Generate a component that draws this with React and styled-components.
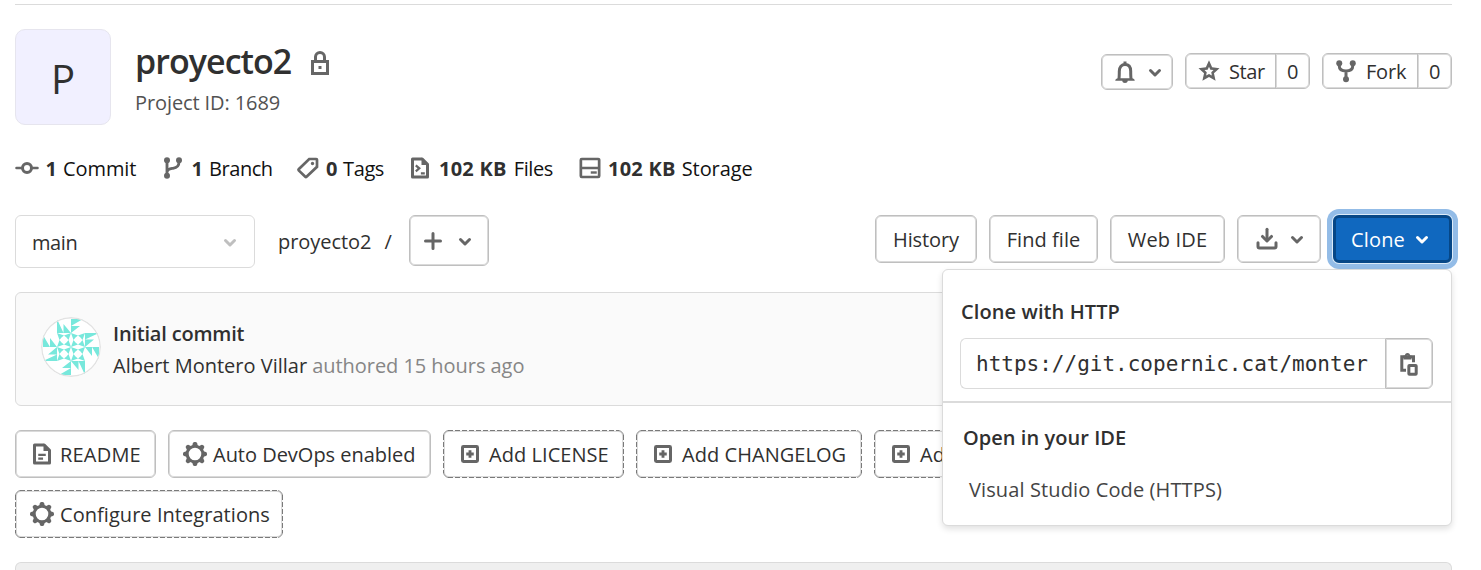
import React from "react";
import styled, { createGlobalStyle, css } from "styled-components";

const Global = createGlobalStyle`
  *, *::before, *::after { box-sizing: border-box; }
  body { margin: 0; background: #fff; overflow: hidden; }
  #root { font-family: "Open Sans", "Noto Sans", sans-serif; font-size: 20px; color: #303030; }
`;

const Page = styled.div`
  width: 1437px;
  height: 570px;
  margin-left: 15px;
  padding-top: 4px;
`;
const TopRule = styled.div`height: 1px; background: #dbdbdb;`;

const Text = styled.span`
  font-size: 20px;
  line-height: 28px;
  padding-top: ${(p) => p.$drop ?? 2}px;
  letter-spacing: ${(p) => p.$ls ?? -0.4}px;
  font-weight: ${(p) => p.$weight || 400};
  color: ${(p) => p.$color || "#303030"};
  white-space: nowrap;
`;

const Glyph = styled.svg`
  display: block;
  flex: none;
  width: 24px;
  height: 24px;
  fill: none;
  stroke: currentColor;
  stroke-width: 2;
  color: ${(p) => p.$color || "#666"};
`;

const paths = {
  lock: (
    <>
      <path d="M3 7h10v8H3zM5 7V4a3 3 0 0 1 6 0v3" />
      <rect x="7" y="10" width="2" height="2" fill="currentColor" stroke="none" />
    </>
  ),
  bell: (
    <>
      <path d="M3.900 13c.3-1.500.3-3 .3-5.500C4.200 4.500 5.800 3 8 3s3.800 1.500 3.800 4.500c0 2.500 0 4 .3 5.500" />
      <path d="M1.500 13.800c0-1 .8-1.600 2-1.600h9c1.200 0 2 .6 2 1.600zM6.200 13.800h3.600c0 1-.8 1.500-1.800 1.500s-1.800-.5-1.800-1.500zM7 1h2v2H7z" fill="currentColor" stroke="none" />
    </>
  ),
  chevron: <path d="M5 7l3 3 3-3" strokeLinecap="round" strokeLinejoin="round" />,
  star: (
    <path
      fill="currentColor"
      fillRule="evenodd"
      stroke="none"
      d="M8 .9L10.100 5.500 15 6.100 11.300 9.450 12.400 14.500 8 12 3.600 14.500 4.700 9.450 1 6.100 5.900 5.500zM8 5.200L7.100 7.100 5 7.350 6.500 8.900 6.100 11 8 10 9.900 11 9.500 8.900 11 7.350 8.900 7.100z"
    />
  ),
  fork: (
    <>
      <path d="M3.500 3v1.500C3.500 7 5.500 8 8 8s4.500-1 4.500-3.500V3M8 8v5" />
      <g fill="currentColor" stroke="none">
        <circle cx="3.500" cy="2.800" r="2" />
        <circle cx="12.500" cy="2.800" r="2" />
        <circle cx="8" cy="13.500" r="2" />
      </g>
    </>
  ),
  commit: (
    <>
      <circle cx="8" cy="8" r="3" />
      <path d="M1 8h4M11 8h4" strokeLinecap="round" strokeWidth="1.700" />
    </>
  ),
  branch: (
    <>
      <path d="M4 3v10M4 10.500c.5-2 2-2 4-2.300 2.500-.4 4-1.200 4-4.200" strokeWidth="1.900" />
      <g fill="currentColor" stroke="none">
        <circle cx="4" cy="2.800" r="2" />
        <circle cx="4" cy="13.200" r="2" />
        <circle cx="12" cy="2.800" r="2" />
      </g>
    </>
  ),
  tag: (
    <>
      <path d="M8.800 2h4.700a.5.5 0 0 1 .5.5v4.700l-7 6.600a.6.6 0 0 1-.8 0L1.800 9.600a.6.6 0 0 1 0-.8z" strokeWidth="1.800" />
      <circle cx="11" cy="5" r="1.100" fill="currentColor" stroke="none" />
    </>
  ),
  code: (
    <>
      <path d="M3 2h6.500L13 5.500V14H3z" strokeLinejoin="round" />
      <path d="M9 1v5h5L9 1z" fill="currentColor" stroke="none" />
      <path d="M5.200 6.200l2.300 2-2.300 2M8.600 11.500h2.600" strokeWidth="1.500" />
    </>
  ),
  disk: (
    <>
      <path d="M2.500 2h11a.6.6 0 0 1 .6.6v10.800a.6.6 0 0 1-.6.6h-11a.6.6 0 0 1-.6-.6V2.600a.6.6 0 0 1 .6-.6zM2 8h12" strokeWidth="1.800" />
      <path d="M8.500 10.200h4v1.600h-4z" fill="currentColor" stroke="none" />
    </>
  ),
  plus: <path d="M8 3v10M3 8h10" strokeLinecap="round" />,
  download: (
    <>
      <path d="M2 10.500V13a1 1 0 0 0 1 1h10a1 1 0 0 0 1-1v-2.500" strokeLinecap="round" />
      <path d="M8 1.500v7" strokeLinecap="round" />
      <path d="M5 6.300L8 9.300l3-3" strokeLinecap="round" strokeLinejoin="round" />
    </>
  ),
  doc: (
    <>
      <path d="M3 2h6.500L13 5.500V14H3z" strokeLinejoin="round" />
      <path d="M9 1v5h5L9 1z" fill="currentColor" stroke="none" />
      <path d="M5.500 8.500h5M5.500 11h3.200" strokeWidth="1.500" />
    </>
  ),
  gear: (
    <>
      <circle cx="8" cy="8" r="5.200" strokeWidth="2" />
      <g fill="currentColor" stroke="none">
        {[0, 45, 90, 135, 180, 225, 270, 315].map((a) => (
          <path key={a} transform={`rotate(${a} 8 8)`} d="M5.900 3.200L6.600.8A1.200 1.200 0 0 1 7.700 0h.6a1.200 1.200 0 0 1 1.100.8l.7 2.400z" />
        ))}
      </g>
    </>
  ),
  plusBox: (
    <>
      <rect x="3" y="3" width="10" height="10" rx=".6" />
      <path d="M8 5.500v5M5.500 8h5" strokeWidth="1.900" />
    </>
  ),
  paste: (
    <>
      <path d="M6 12.200H3.200V3.200h7.800V6.800" />
      <path d="M4.300 5V2.400h1a1.700 1.700 0 0 1 3.400 0h1V5zM7 2.400a.6.6 0 1 0 .01 0z" fill="currentColor" fillRule="evenodd" stroke="none" />
      <rect x="7.900" y="9" width="4.900" height="5.900" rx=".4" />
    </>
  ),
};

const Icon = ({ name, color }) => (
  <Glyph viewBox="0 0 16 16" $color={color} aria-hidden="true">
    {paths[name]}
  </Glyph>
);

const Header = styled.header`
  display: flex;
  height: 96px;
  margin-top: 24px;
`;
const ProjectMark = styled.div`
  width: 96px;
  height: 96px;
  border: 1px solid #e6e5ee;
  border-radius: 10px;
  background: #f1f0ff;
  display: grid;
  place-items: center;
  font-size: 40px;
  line-height: 56px;
  padding-top: 3px;
`;
const TitleBlock = styled.div`
  display: flex;
  flex-direction: column;
  padding: 10px 0 0 24px;
  flex: 1;
`;
const TitleLine = styled.div`
  display: flex;
  align-items: center;
  gap: 17px;
  height: 48px;
`;
const Title = styled.h1`
  margin: 0;
  font-size: 34px;
  line-height: 44px;
  font-weight: 600;
  letter-spacing: -0.95px;
  padding-bottom: 4px;
`;
const Social = styled.div`
  display: flex;
  gap: 12px;
  padding-top: 24px;
`;

const frame = css`
  border: 1px solid #bfbfbf;
  border-radius: 6px;
  background: #fff;
  box-shadow: inset 0 0 0 1px #dadada;
`;
const SmallButton = styled.div`
  ${frame}
  display: flex;
  align-items: center;
  width: ${(p) => p.$w}px;
  height: 36px;
  margin-top: ${(p) => p.$drop || 0}px;
  padding-left: 11px;
  gap: ${(p) => p.$gap ?? 7}px;
`;
const Count = styled.div`
  margin-left: auto;
  display: grid;
  place-items: center;
  width: 34px;
  height: 34px;
  border-left: 1px solid #bfbfbf;
  box-shadow: inset 1px 0 0 #dadada;
`;

const Stats = styled.div`
  display: flex;
  align-items: center;
  height: 30px;
  margin-top: 28px;
`;
const Stat = styled.div`
  display: flex;
  align-items: center;
  width: ${(p) => p.$w}px;
  gap: ${(p) => p.$gap}px;
`;

const Toolbar = styled.div`
  display: flex;
  height: 53px;
  margin-top: 32px;
`;
const BranchSelect = styled.div`
  display: flex;
  align-items: center;
  justify-content: space-between;
  width: 240px;
  height: 53px;
  padding: 0 12px 0 16px;
  border: 1px solid #dbdbdb;
  border-radius: 6px;
`;
const Crumb = styled.div`
  display: flex;
  align-items: center;
  gap: 13px;
  height: 53px;
  width: 131px;
  margin-left: 23px;
`;
const Button = styled.div`
  ${frame}
  display: flex;
  align-items: center;
  justify-content: center;
  width: ${(p) => p.$w}px;
  height: ${(p) => p.$h || 48}px;
  padding-left: ${(p) => p.$nudge || 0}px;
  gap: ${(p) => p.$gap ?? 8}px;
`;
const Actions = styled.div`
  display: flex;
  gap: 12px;
  margin-left: auto;
`;
const CloneWrap = styled.div`position: relative;`;
const CloneButton = styled(Button)`
  background: #1068bf;
  border: 3px solid #064787;
  box-shadow: 0 0 0 1px #dcebf8, 0 0 0 6px #93bce7;
  gap: 5px;
`;

const Menu = styled.div`
  position: absolute;
  z-index: 2;
  top: 54px;
  right: 0;
  width: 510px;
  height: 257px;
  border: 1px solid #dbdbdb;
  border-radius: 6px;
  background: #fff;
  box-shadow: 0 3px 6px rgba(0, 0, 0, 0.12);
`;
const CloneSection = styled.section`
  height: 133px;
  padding: 28px 18px 0 17px;
  border-bottom: 2px solid #dbdbdb;
`;
const IdeSection = styled.section`
  display: flex;
  flex-direction: column;
  padding: 19px 0 0 20px;
  gap: 22px;
`;
const MenuItem = styled.div`
  display: flex;
  padding-left: 6px;
`;
const MenuHeading = styled.div`
  padding-left: 1px;
  height: 40px;
`;
const UrlRow = styled.div`
  display: flex;
  height: 51px;
`;
const UrlField = styled.div`
  flex: 1;
  border: 1px solid #dbdbdb;
  border-right: 0;
  border-radius: 6px 0 0 6px;
  padding: 10px 16px 0 15px;
`;
const Url = styled.div`
  width: 393px;
  overflow: hidden;
  white-space: nowrap;
  font-family: "DejaVu Sans Mono", monospace;
  font-size: 21px;
  line-height: 30px;
`;
const CopyButton = styled.div`
  ${frame}
  display: grid;
  place-items: center;
  width: 48px;
  border-radius: 0 6px 6px 0;
`;

const CommitPanel = styled.section`
  display: flex;
  height: 114px;
  margin-top: 24px;
  padding: 24px 0 0 25px;
  gap: 12px;
  border: 1px solid #dbdbdb;
  border-radius: 6px;
  background: #fafafa;
`;
const CommitText = styled.div`
  display: flex;
  flex-direction: column;
  gap: 2px;
  padding-top: 1px;
`;
const Avatar = styled.svg`
  width: 60px;
  height: 60px;
  border-radius: 50%;
`;

const Shortcuts = styled.div`
  display: flex;
  flex-wrap: wrap;
  gap: 12px;
  width: 1437px;
  margin-top: 24px;
`;
const Shortcut = styled.div`
  display: flex;
  align-items: center;
  width: ${(p) => p.$w}px;
  height: 48px;
  padding-left: 14px;
  gap: ${(p) => p.$gap || 6}px;
  ${frame}
`;
const across = "repeating-linear-gradient(90deg, #7a7a7a 0 5px, #f4f4f4 5px 7px)";
const down = "repeating-linear-gradient(180deg, #7a7a7a 0 5px, #f4f4f4 5px 7px)";
const DashedShortcut = styled(Shortcut)`
  position: relative;
  border-color: #8a8a8a;
  &::after {
    content: "";
    position: absolute;
    inset: -1px;
    background:
      ${across} 5px 0 / calc(100% - 10px) 1px no-repeat,
      ${across} 5px 100% / calc(100% - 10px) 1px no-repeat,
      ${down} 0 5px / 1px calc(100% - 10px) no-repeat,
      ${down} 100% 5px / 1px calc(100% - 10px) no-repeat;
  }
`;
const FilesHead = styled.div`
  height: 12px;
  margin-top: 24px;
  border: 1px solid #dbdbdb;
  border-bottom: 0;
  border-radius: 6px 6px 0 0;
  background: #efefef;
`;

const stats = [
  { icon: "commit", n: "1", label: "Commit", w: 146, ls: -0.1, gap: 6.5 },
  { icon: "branch", n: "1", label: "Branch", w: 135, ls: -0.45, gap: 6.5 },
  { icon: "tag", n: "0", label: "Tags", w: 112, ls: -0.4, gap: 6 },
  { icon: "code", n: "102 KB", nls: 0.25, label: "Files", w: 170, ls: -0.4, gap: 7 },
  { icon: "disk", n: "102 KB", nls: 0.25, label: "Storage", w: 190, ls: -0.1, gap: 6 },
];

const shortcuts = [
  { icon: "doc", label: "README", w: 141, ls: 0.2 },
  { icon: "gear", label: "Auto DevOps enabled", w: 263, ls: -0.02 },
  { icon: "plusBox", label: "Add LICENSE", w: 181, gap: 7, dashed: true },
  { icon: "plusBox", label: "Add CHANGELOG", w: 226, gap: 7, dashed: true },
  { icon: "plusBox", label: "Add", w: 320, gap: 7, dashed: true },
  { icon: "gear", label: "Configure Integrations", w: 268, dashed: true },
];

const Quarter = ({ turn }) => (
  <g transform={`rotate(${turn} 30 30)`}>
    <path d="M16 2V16H22.500zM22.500 7V16H30zM30 2H42L30 9zM30 9H39L30 16z" />
    <path d="M16 16l7 2.500-2.500 2-2 2.500zM30 16l-7 2.500 2.500 2 2 2.500zM16 30l7-2.500-2.500-2-2-2.500zM30 30l-7-2.500 2.500-2 2-2.500z" />
  </g>
);

export default function App() {
  return (
    <Page>
      <Global />
      <TopRule />
      <Header>
        <ProjectMark>P</ProjectMark>
        <TitleBlock>
          <TitleLine>
            <Title>proyecto2</Title>
            <Icon name="lock" />
          </TitleLine>
          <Text $color="#525252" $ls={-0.1}>Project ID: 1689</Text>
        </TitleBlock>
        <Social>
          <SmallButton $w={72} $gap={6} $drop={1}>
            <Icon name="bell" />
            <Icon name="chevron" />
          </SmallButton>
          <SmallButton $w={125} $gap={8}>
            <Icon name="star" />
            <Text>Star</Text>
            <Count><Text>0</Text></Count>
          </SmallButton>
          <SmallButton $w={130} $gap={8}>
            <Icon name="fork" />
            <Text $ls={-0.2}>Fork</Text>
            <Count><Text>0</Text></Count>
          </SmallButton>
        </Social>
      </Header>

      <Stats>
        {stats.map((s) => (
          <Stat key={s.icon} $w={s.w} $gap={s.gap}>
            <Icon name={s.icon} />
            <Text $weight={700} $ls={s.nls}>{s.n}</Text>
            <Text $color="#111" $ls={s.ls}>{s.label}</Text>
          </Stat>
        ))}
      </Stats>

      <Toolbar>
        <BranchSelect>
          <Text>main</Text>
          <Icon name="chevron" color="#bfbfbf" />
        </BranchSelect>
        <Crumb>
          <Text $ls={-0.05} $drop={0}>proyecto2</Text>
          <Text $drop={0}>/</Text>
        </Crumb>
        <Button $w={80} $h={51}>
          <Icon name="plus" />
          <Icon name="chevron" />
        </Button>
        <Actions>
          <Button $w={102}><Text $ls={-0.1}>History</Text></Button>
          <Button $w={109}><Text $ls={0.05}>Find file</Text></Button>
          <Button $w={115}><Text $ls={0.15}>Web IDE</Text></Button>
          <Button $w={84} $gap={6} $nudge={6}>
            <Icon name="download" />
            <Icon name="chevron" />
          </Button>
          <CloneWrap>
            <CloneButton $w={119}>
              <Text $color="#fff" $ls={0.15}>Clone</Text>
              <Icon name="chevron" color="#fff" />
            </CloneButton>
            <Menu>
              <CloneSection>
                <MenuHeading><Text $weight={600} $ls={0.1}>Clone with HTTP</Text></MenuHeading>
                <UrlRow>
                  <UrlField><Url>https://git.copernic.cat/montero</Url></UrlField>
                  <CopyButton><Icon name="paste" /></CopyButton>
                </UrlRow>
              </CloneSection>
              <IdeSection>
                <Text $weight={600} $ls={0.05}>Open in your IDE</Text>
                <MenuItem><Text $color="#444" $ls={0.12}>Visual Studio Code (HTTPS)</Text></MenuItem>
              </IdeSection>
            </Menu>
          </CloneWrap>
        </Actions>
      </Toolbar>

      <CommitPanel>
        <Avatar viewBox="0 0 60 60">
          <circle cx="30" cy="30" r="30" fill="#fff" />
          <g fill="#78e8dc">
            {[0, 90, 180, 270].map((t) => <Quarter key={t} turn={t} />)}
          </g>
          <circle cx="30" cy="30" r="29.3" fill="none" stroke="#e2e2e2" strokeWidth="1.400" />
        </Avatar>
        <CommitText>
          <Text $weight={600} $ls={-0.2}>Initial commit</Text>
          <Text $ls={0}>
            Albert Montero Villar <Text $color="#868686" $ls={-0.05}>authored 15 hours ago</Text>
          </Text>
        </CommitText>
      </CommitPanel>

      <Shortcuts>
        {shortcuts.map((s) => {
          const Box = s.dashed ? DashedShortcut : Shortcut;
          return (
            <Box key={s.label} $w={s.w} $gap={s.gap}>
              <Icon name={s.icon} />
              <Text $ls={s.ls ?? 0.05}>{s.label}</Text>
            </Box>
          );
        })}
      </Shortcuts>
      <FilesHead />
    </Page>
  );
}
